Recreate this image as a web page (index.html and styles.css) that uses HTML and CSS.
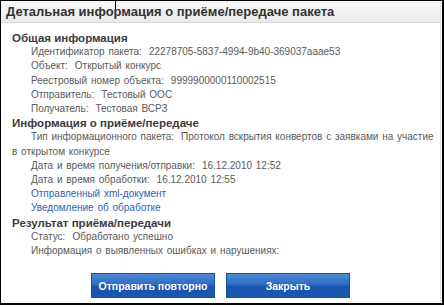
FILE: index.html
```html
<!DOCTYPE html>
<html lang="ru">
<head>
    <meta charset="UTF-8">
    <title>Детальная информация о приёме/передаче пакета</title>
    <link rel="stylesheet" href="styles.css">
</head>
<body>
    <div class="window">
        <div class="panel">
            <!-- Title bar -->
            <div class="window-title">
                Детальная информация о приёме/передаче пакета
                <span class="cursor"></span>
            </div>

            <div class="window-body">
                <div class="section-title">Общая информация</div>
                <div class="field"><span class="label">Идентификатор пакета:</span>22278705-5837-4994-9b40-369037aaae53</div>
                <div class="field"><span class="label">Объект:</span>Открытый конкурс</div>
                <div class="field"><span class="label">Реестровый номер объекта:</span>9999900000110002515</div>
                <div class="field"><span class="label">Отправитель:</span>Тестовый ООС</div>
                <div class="field"><span class="label">Получатель:</span>Тестовая ВСРЗ</div>

                <div class="section-title">Информация о приёме/передаче</div>
                <div class="field"><span class="label">Тип информационного пакета:</span>Протокол вскрытия конвертов с заявками на участие в открытом конкурсе</div>
                <div class="field"><span class="label">Дата и время получения/отправки:</span>16.12.2010 12:52</div>
                <div class="field"><span class="label">Дата и время обработки:</span>16.12.2010 12:55</div>
                <div class="field"><a href="#">Отправленный xml-документ</a></div>
                <div class="field"><a href="#">Уведомление об обработке</a></div>

                <div class="section-title">Результат приёма/передачи</div>
                <div class="field"><span class="label">Статус:</span>Обработано успешно</div>
                <div class="field"><span class="label">Информация о выявленных ошибках и нарушениях:</span></div>
            </div>

            <!-- Buttons -->
            <div class="buttons">
                <button class="btn">Отправить повторно</button>
                <button class="btn">Закрыть</button>
            </div>
        </div>
    </div>
</body>
</html>
```

FILE: styles.css
```css
body {
    margin: 0;
    background: #ffffff;
    font-family: "Liberation Sans", Arial, sans-serif;
}

/* Window frame */
.window {
    width: 444px;
    height: 305px;
    box-sizing: border-box;
    border-top: 1px solid #000000;
    border-left: 1px solid #000000;
    border-right: 2px solid #000000;
    border-bottom: 2px solid #000000;
    background: #ffffff;
}

.panel {
    height: 100%;
    margin-right: 1px;
    border-right: 1px solid #e2e2e2;
    display: flex;
    flex-direction: column;
}

/* Title bar */
.window-title {
    position: relative;
    height: 21px;
    line-height: 21px;
    padding-left: 5px;
    font-size: 13px;
    font-weight: bold;
    color: #333333;
    background: linear-gradient(#f8f8f8, #ebebeb);
    border-bottom: 1px solid #d9d9d9;
}

.cursor {
    position: absolute;
    left: 114px;
    top: 0;
    width: 1px;
    height: 8px;
    background: #000000;
}

/* Content */
.window-body {
    padding: 8px 2px 0 11px;
    font-size: 10px;
    line-height: 14.2px;
    word-spacing: 1px;
    color: #5a5a5a;
}

.section-title {
    font-weight: bold;
    font-size: 11.5px;
    line-height: 14.2px;
    word-spacing: 0;
    color: #3c3c3c;
}

.field {
    text-indent: 19px;
}

.field .label {
    margin-right: 7px;
}

.field a {
    color: #2f62b4;
    text-decoration: none;
}

/* Buttons */
.buttons {
    display: flex;
    justify-content: center;
    gap: 11px;
    margin-top: 15px;
}

.btn {
    width: 124px;
    height: 25px;
    padding: 0;
    border: 1px solid #1a4f9c;
    background: linear-gradient(#4f8ad6 0%, #2d6cc4 45%, #1a55ad 55%, #1c58b0 100%);
    color: #ffffff;
    font-family: "Liberation Sans", Arial, sans-serif;
    font-size: 10.5px;
    font-weight: bold;
    white-space: nowrap;
    cursor: pointer;
}
```
